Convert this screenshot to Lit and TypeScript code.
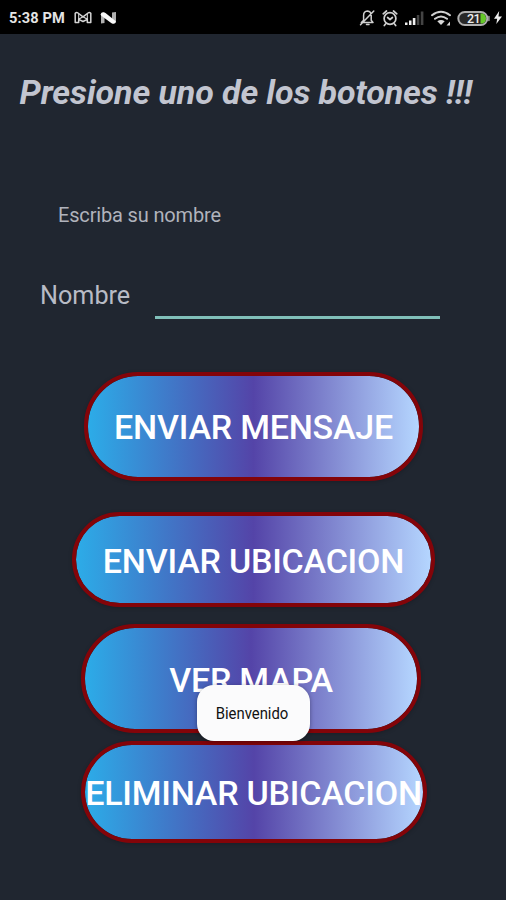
import { LitElement, html, css } from "lit";
import { customElement, property } from "lit/decorators.js";

@customElement("status-bar")
class StatusBar extends LitElement {
  static styles = css`
    :host {
      display: flex;
      align-items: center;
      box-sizing: border-box;
      height: 34px;
      padding: 1px 4px 0 9px;
      background: #000;
      color: #e4e4e4;
      font: 700 14.6px/34px Roboto, sans-serif;
      letter-spacing: .12px;
    }
    .time { width: 65px; white-space: nowrap; }
    .spacer { flex: 1; }
    svg { display: block; flex: none; }
    .left { display: flex; gap: 8px; }
    .right { display: flex; align-items: center; }
  `;
  render() {
    return html`
      <span class="time">5:38 PM</span>
      <div class="left">
        <svg width="18" height="14" viewBox="0 0 18 14" fill="none" stroke="#d4d4d4" stroke-width="1.500" stroke-linejoin="round">
          <path d="M1.200 11.500V2.300Q2.500 1 4 2L9 5.800 14 2q1.500-1 2.800.3v9.200H13.300V8.300L9 10.500 4.700 8.300v3.200z" />
          <path d="M4.700 8.300V3M13.300 8.300V3M4.700 8.300 9 5.800l4.300 2.500" stroke-width="1.100" />
        </svg>
        <svg width="17" height="14" viewBox="0 0 17 14">
          <path d="M1 2.500 4.500 1.500V12L1 12.500zM12 1.500 16 1v10.500l-4 1z" fill="#b0b0b0" />
          <path d="M.800 3.200Q1.200.800 3.600 1.200L5.500 2 15.800 10.300Q15.500 13 13.200 12.800L11.500 12.300 1 4.500z" fill="#fafafa" />
        </svg>
      </div>
      <div class="spacer"></div>
      <div class="right">
        <svg width="136" height="20" viewBox="358 7 136 20" fill="none" stroke="#d0d0d0" stroke-width="1.500" stroke-linecap="round" stroke-linejoin="round">
          <path d="M361.300 21.500h11.700l-1.800-2.200v-5c0-2.700-1.500-4-3.700-4.300-2.600.2-3.900 2-3.900 4.300v5zM373.800 10 360.500 23.800M366.500 23.500h2.500" />
          <circle cx="390" cy="17.500" r="5.900" stroke-width="1.700" />
          <path d="M383.200 12.800 386.500 10M396.800 12.800 393.500 10M387.600 16.500l2.400 2 2.400-2M385.500 23l-1.200 1.500M394.500 23l1.200 1.500" stroke-width="1.700" />
          <g stroke="none" fill="#f0f0f0">
            <path d="M405 21.500h2.500V24H405zM409 19.500h2.500V24H409zM412.800 17h2.600v7h-2.600z" />
            <path d="M416.800 14h2.500v10h-2.500zM420.800 10.500h2.600V24h-2.600z" fill="#444" />
          </g>
          <path d="M432 14.200q9-7 18 0M435 17.800q6-4.600 12 0" stroke-width="2" />
          <path d="M437.300 20.200q3.700-2.400 7.400 0L441 24zM446.500 24.500h3.500v-4z" fill="#d8d8d8" stroke="none" />
          <rect x="458.300" y="11" width="29" height="13" rx="6.500" fill="#292929" stroke="#b0b0b0" stroke-width="2" />
          <path d="M480.500 12.500h2q3.500 1 3.500 5t-3.500 5h-2z" fill="#65c829" stroke="none" />
          <path d="M488.900 15.500v4" stroke="#999" stroke-width="1.600" />
          <text x="467" y="22" font-family="Roboto, sans-serif" font-size="12.500" font-weight="500" letter-spacing="-.6" fill="#eee" stroke="none">21</text>
        </svg>
        <svg width="8" height="16" viewBox="0 0 8 16" fill="#eee"><path d="M5.200 1 0 8.800h3.200L2.300 14 8 6.500H4.500z" /></svg>
      </div>
    `;
  }
}

@customElement("pill-button")
class PillButton extends LitElement {
  @property() label = "";
  static styles = css`
    :host { display: block; box-sizing: border-box; }
    button {
      display: flex;
      align-items: center;
      justify-content: center;
      box-sizing: border-box;
      width: 100%;
      height: 100%;
      padding: 0;
      border: 4px solid #830409;
      border-radius: 54px;
      background: linear-gradient(90deg, #2cace8 0%, #5444a8 50%, #b5d6ff 100%) padding-box;
      box-shadow: 0 1px 4px rgba(0, 0, 0, .2);
      color: #fff;
      font: 500 34px/40px Roboto, sans-serif;
      letter-spacing: -.22px;
      white-space: nowrap;
    }
    span { display: block; position: relative; top: var(--label-shift, 0px); }
  `;
  render() {
    return html`<button><span>${this.label}</span></button>`;
  }
}

@customElement("app-root")
class AppRoot extends LitElement {
  static styles = css`
    :host {
      display: flex;
      flex-direction: column;
      position: relative;
      width: 506px;
      height: 900px;
      overflow: hidden;
      background: #202630;
      color: #c2c5d0;
      font-family: Roboto, sans-serif;
    }
    h1 {
      margin: 38px 0 0 19.500px;
      font: italic 700 34px/40px Roboto, sans-serif;
      letter-spacing: -.1px;
      white-space: nowrap;
    }
    .hint { margin: 91px 0 0 58px; font-size: 20px; line-height: 24px; letter-spacing: -.16px; color: #b0b3bc; }
    .field { display: flex; margin: 53px 0 0 40px; height: 39px; }
    label { width: 115px; font-size: 25.200px; line-height: 31px; color: #b8bbc5; }
    .input { width: 284.500px; box-sizing: border-box; border-bottom: 3px solid #80bfb9; }
    .send { width: 339px; height: 109px; margin: 53px 0 0 84px; }
    .location { width: 363px; height: 95px; margin: 31px 0 0 72px; --label-shift: 1px; }
    .map { width: 340px; height: 109px; margin: 17px 0 0 81px; --label-shift: 1px; }
    .remove { width: 346px; height: 102px; margin: 8px 0 0 80.500px; --label-shift: 1px; }
    .toast {
      position: absolute;
      left: 197px;
      top: 685px;
      width: 113px;
      height: 56px;
      border-radius: 17px;
      background: #fbfbfc;
      color: #111;
      font-size: 16px;
      line-height: 57px;
      text-align: center;
      box-shadow: 0 1px 4px rgba(0, 0, 0, .35);
    }
    .toast span { display: block; transform: translateX(-1.500px) scaleX(.93); }
  `;
  render() {
    return html`
      <status-bar></status-bar>
      <h1>Presione uno de los botones !!!</h1>
      <div class="hint">Escriba su nombre</div>
      <div class="field"><label>Nombre</label><div class="input"></div></div>
      <pill-button class="send" label="ENVIAR MENSAJE"></pill-button>
      <pill-button class="location" label="ENVIAR UBICACION"></pill-button>
      <pill-button class="map" label="VER MAPA"></pill-button>
      <pill-button class="remove" label="ELIMINAR UBICACION"></pill-button>
      <div class="toast"><span>Bienvenido</span></div>
    `;
  }
}
